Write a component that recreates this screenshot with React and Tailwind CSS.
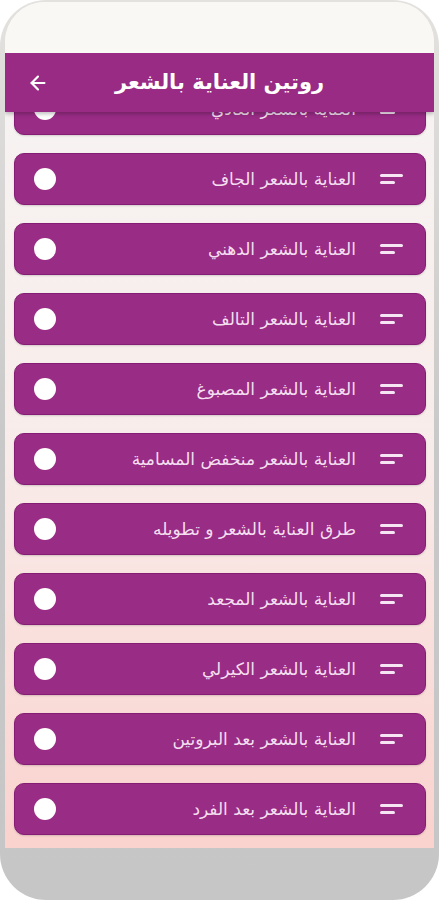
import React from 'react';

const items = [
  'العناية بالشعر العادي',
  'العناية بالشعر الجاف',
  'العناية بالشعر الدهني',
  'العناية بالشعر التالف',
  'العناية بالشعر المصبوغ',
  'العناية بالشعر منخفض المسامية',
  'طرق العناية بالشعر و تطويله',
  'العناية بالشعر المجعد',
  'العناية بالشعر الكيرلي',
  'العناية بالشعر بعد البروتين',
  'العناية بالشعر بعد الفرد',
];

function MenuLines() {
  // rtl container, so items-end puts both bars flush left
  return (
    <div className="flex flex-col gap-[4px] w-[23px] items-end">
      <span className="block h-[3px] w-[23px] bg-[#f6e6f3] rounded-full" />
      <span className="block h-[3px] w-[15px] bg-[#f6e6f3] rounded-full" />
    </div>
  );
}

function Row({ label }) {
  return (
    <div
      dir="rtl"
      className="h-[52px] shrink-0 rounded-[10px] bg-[#992c85] border border-[#861d75] flex items-center pr-[22px] pl-[19px] shadow-[0_1px_2px_rgba(0,0,0,0.15)]"
    >
      <MenuLines />
      <span className="mr-[24px] text-[17px] text-[#f4dff0] leading-none">{label}</span>
      <span className="mr-auto block w-[22px] h-[22px] rounded-full bg-white" />
    </div>
  );
}

export default function App() {
  return (
    <div
      className="w-[439px] h-[900px] bg-white overflow-hidden"
      style={{ fontFamily: '"DejaVu Sans", "Noto Sans", sans-serif' }}
    >
      <div className="h-full rounded-[46px] bg-gradient-to-b from-[#e4e2df] via-[#c8c8c8] to-[#c6c6c6] px-[5px] pt-[2px] flex flex-col">
        <div className="h-[846px] rounded-t-[40px] overflow-hidden flex flex-col bg-[#faf8f5]">
          <div className="h-[51px] shrink-0 bg-[#faf8f5]" />
          <div className="flex-1 relative overflow-hidden bg-gradient-to-b from-[#f6f4f3] via-[#f8ecea] to-[#fad2ce]">
            <div className="absolute top-0 left-0 right-0 h-[59px] bg-[#992b84] shadow-[0_2px_4px_rgba(0,0,0,0.25)] z-10 flex items-center justify-center">
              <svg className="absolute left-[22px]" width="22" height="22" viewBox="0 0 24 24" fill="none" stroke="white" strokeWidth="2.4" strokeLinecap="round" strokeLinejoin="round">
                <path d="M19 12H5" />
                <path d="M12 19l-7-7 7-7" />
              </svg>
              <span dir="rtl" className="text-white text-[21px] font-bold leading-none">روتين العناية بالشعر</span>
            </div>
            <div className="flex flex-col gap-[18px] pt-[30px] pl-[9px] pr-[8px]">
              {items.map((t) => (
                <Row key={t} label={t} />
              ))}
            </div>
          </div>
        </div>
      </div>
    </div>
  );
}
